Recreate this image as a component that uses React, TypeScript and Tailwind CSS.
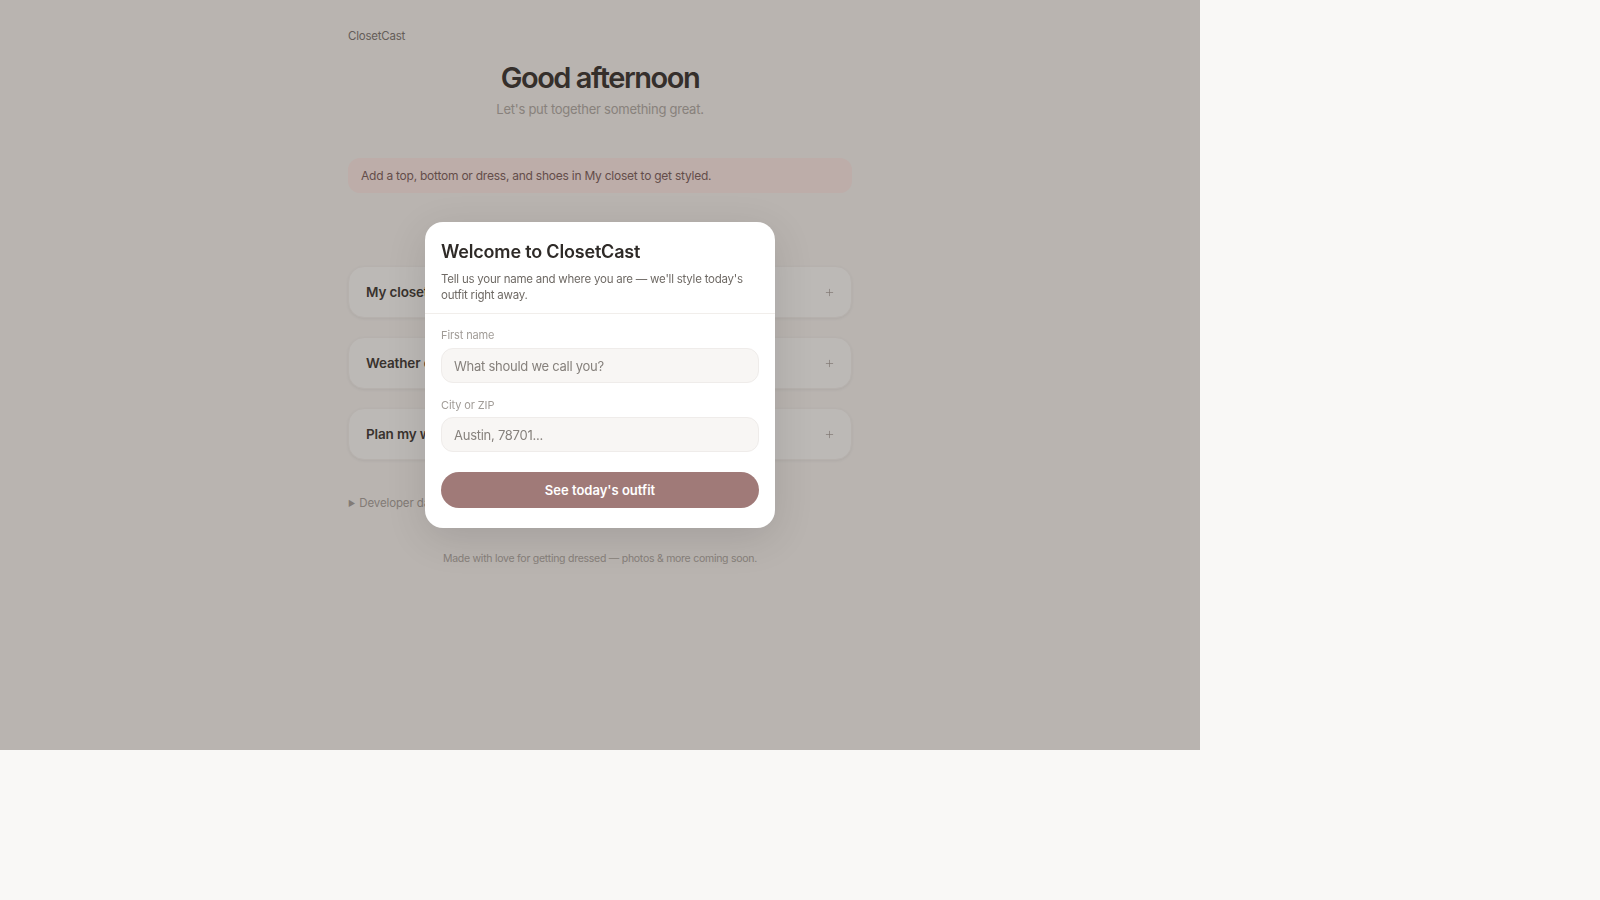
import React, { useState } from 'react';
import { Plus } from 'lucide-react';

const sections = ['My closet', 'Weather outside', 'Plan my week'];

const App: React.FC = () => {
    const [name, setName] = useState('');
    const [place, setPlace] = useState('');

    return (
        <div className="w-full h-screen bg-[#f9f8f6] font-['Inter','Liberation_Sans',sans-serif]">
            {/* App frame */}
            <div className="relative w-[1200px] h-[750px] overflow-hidden bg-[#f6f2ee]">
                <main className="mx-auto w-[504px] pt-7 flex flex-col">
                    <div className="text-[11.5px] leading-4 tracking-[-0.02em] text-[#7d7671]">ClosetCast</div>

                    <h1 className="mt-4 text-center text-[29px] leading-9 font-semibold tracking-[-0.05em] text-[#3a3430]">
                        Good afternoon
                    </h1>
                    <p className="mt-[3px] text-center text-[13px] leading-5 tracking-[-0.02em] text-[#b1aaa4]">
                        Let's put together something great.
                    </p>

                    {/* Notice */}
                    <div className="mt-[39px] rounded-xl bg-[#fde8e4] px-[13px] py-2 text-[12px] leading-[19px] tracking-[-0.02em] text-[#7c5f5c]">
                        Add a top, bottom or dress, and shoes in My closet to get styled.
                    </div>

                    {/* Sections */}
                    <div className="mt-[73px] flex flex-col gap-[19px]">
                        {sections.map((s) => (
                            <div
                                key={s}
                                className="h-[52px] rounded-2xl border border-[#f2eeea] bg-[#fbf9f7] shadow-[0_1px_3px_rgba(0,0,0,0.06)] pl-[17px] pr-[16px] flex items-center justify-between">
                                <span className="text-[13.5px] font-semibold tracking-[-0.01em] text-[#3f3934]">{s}</span>
                                <Plus size={11} strokeWidth={1.5} className="text-[#a39b94]" />
                            </div>
                        ))}
                    </div>

                    <div className="mt-[35px] text-[11.5px] leading-4 tracking-[-0.01em] text-[#a8a19b] flex items-center gap-1">
                        <span className="text-[8px]">▶</span>
                        <span>Developer data</span>
                    </div>

                    <footer className="mt-[40px] text-center text-[10.5px] leading-4 tracking-[-0.025em] text-[#aea7a1]">
                        Made with love for getting dressed — photos &amp; more coming soon.
                    </footer>
                </main>

                {/* Modal overlay */}
                <div className="absolute inset-0 bg-[#2a2520]/30 backdrop-blur-[0.5px] flex items-center justify-center">
                    <div className="w-[350px] rounded-[18px] bg-white shadow-[0_10px_40px_rgba(0,0,0,0.12)]">
                        <div className="px-4 pt-[16.5px] pb-[10px] border-b border-[#f1eeeb]">
                            <h2 className="text-[18px] leading-7 font-semibold tracking-[-0.01em] text-[#2e2a27]">
                                Welcome to ClosetCast
                            </h2>
                            <p className="mt-[5px] text-[11.5px] leading-4 tracking-[-0.02em] text-[#6f6a65]">
                                Tell us your name and where you are — we'll style today's outfit right away.
                            </p>
                        </div>
                        <div className="px-4 pt-[13px] pb-5 flex flex-col">
                            <label className="text-[11px] leading-4 tracking-[-0.01em] text-[#a19c97]">First name</label>
                            <input
                                value={name}
                                onChange={(e) => setName(e.target.value)}
                                placeholder="What should we call you?"
                                className="mt-[5px] h-[35px] rounded-xl border border-[#efecea] bg-[#f8f6f4] px-3 text-[13px] tracking-[-0.02em] text-[#2b2724] placeholder:text-[#86817c] outline-none"
                            />
                            <label className="mt-[14px] text-[11px] leading-4 tracking-[-0.01em] text-[#a19c97]">City or ZIP</label>
                            <input
                                value={place}
                                onChange={(e) => setPlace(e.target.value)}
                                placeholder="Austin, 78701..."
                                className="mt-[4px] h-[35px] rounded-xl border border-[#efecea] bg-[#f8f6f4] px-3 text-[13px] tracking-[-0.02em] text-[#2b2724] placeholder:text-[#86817c] outline-none"
                            />
                            <button className="mt-5 h-9 rounded-full bg-[#a07a78] text-[13px] font-semibold text-white">
                                See today's outfit
                            </button>
                        </div>
                    </div>
                </div>
            </div>
        </div>
    );
};

export default App;
